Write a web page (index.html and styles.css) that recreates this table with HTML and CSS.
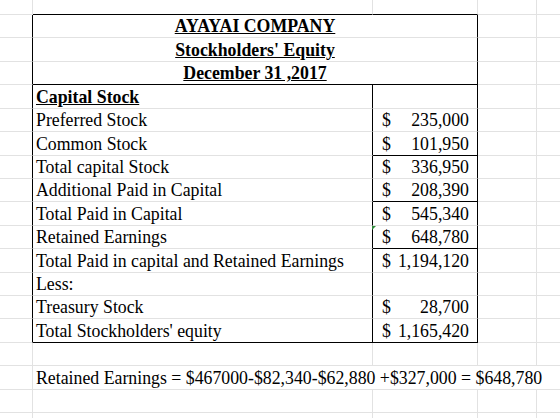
FILE: index.html
```html
<!DOCTYPE html>
<html lang="en">
<head>
    <meta charset="UTF-8">
    <meta name="viewport" content="width=device-width, initial-scale=1.0">
    <title>Ayayai Company - Stockholders' Equity</title>
    <link rel="stylesheet" href="styles.css">
</head>
<body>
    <div class="sheet">
        <!-- partial row above the statement -->
        <div></div><div class="rule"></div><div class="rule"></div><div></div><div></div>

        <!-- heading -->
        <div class="edge"></div><div class="title">AYAYAI COMPANY</div><div></div><div></div>
        <div class="edge"></div><div class="title">Stockholders' Equity</div><div></div><div></div>
        <div class="edge"></div><div class="title rule">December 31 ,2017</div><div></div><div></div>

        <!-- statement body -->
        <div class="edge"></div><div class="label head">Capital Stock</div><div class="amt"></div><div></div><div></div>
        <div class="edge"></div><div class="label">Preferred Stock</div><div class="amt"><span>$</span><span>235,000</span></div><div></div><div></div>
        <div class="edge"></div><div class="label">Common Stock</div><div class="amt rule"><span>$</span><span>101,950</span></div><div></div><div></div>
        <div class="edge"></div><div class="label">Total capital Stock</div><div class="amt"><span>$</span><span>336,950</span></div><div></div><div></div>
        <div class="edge"></div><div class="label">Additional Paid in Capital</div><div class="amt rule"><span>$</span><span>208,390</span></div><div></div><div></div>
        <div class="edge"></div><div class="label">Total Paid in Capital</div><div class="amt"><span>$</span><span>545,340</span></div><div></div><div></div>
        <div class="edge"></div><div class="label">Retained Earnings</div><div class="amt rule flag"><span>$</span><span>648,780</span></div><div></div><div></div>
        <div class="edge"></div><div class="label">Total Paid in capital and Retained Earnings</div><div class="amt"><span>$</span><span>1,194,120</span></div><div></div><div></div>
        <div class="edge"></div><div class="label">Less:</div><div class="amt"></div><div></div><div></div>
        <div class="edge"></div><div class="label">Treasury Stock</div><div class="amt"><span>$</span><span>28,700</span></div><div></div><div></div>
        <div class="edge"></div><div class="label rule">Total Stockholders' equity</div><div class="amt rule"><span>$</span><span>1,165,420</span></div><div></div><div></div>

        <!-- working below the statement -->
        <div></div><div></div><div></div><div></div><div></div>
        <div></div><div class="note">Retained Earnings = $467000-$82,340-$62,880 +$327,000 = $648,780</div>
        <div></div><div></div><div></div><div></div><div></div>
        <div></div><div></div><div></div><div></div><div></div>
    </div>
</body>
</html>
```

FILE: styles.css
```css
body { margin: 0; background: #fff; overflow: hidden; }

.sheet {
    display: grid;
    grid-template-columns: 33px 340px 105px 59px 30px;
    grid-template-rows: 15px repeat(18, 23.43px);
    width: 560px;
    height: 418px;
    overflow: hidden;
    font-family: "Liberation Serif", "Times New Roman", serif;
    font-size: 17.8px;
    color: #000;
}
.sheet > div {
    box-sizing: border-box;
    display: flex;
    align-items: flex-end;
    padding: 0 3px;
    white-space: nowrap;
    border-right: 1px solid #e2e2e2;
    border-bottom: 1px solid #e2e2e2;
}

/* statement frame */
.sheet > .edge { border-right-color: #000; }
.sheet > .label { border-right-color: #000; }
.sheet > .amt { border-right-color: #000; justify-content: space-between; padding: 0 8px 0 9px; }
.sheet > .rule { border-bottom-color: #000; }

.sheet > .title {
    grid-column: span 2;
    justify-content: center;
    border-right-color: #000;
    font-weight: bold;
    text-decoration: underline;
}
.head { font-weight: bold; text-decoration: underline; }

.sheet > .note { grid-column: span 4; border-right: none; }

/* excel error marker */
.flag { position: relative; }
.flag::before {
    content: "";
    position: absolute;
    left: -1px;
    top: 0;
    border-top: 4px solid #2f8a3a;
    border-right: 4px solid transparent;
}
```
